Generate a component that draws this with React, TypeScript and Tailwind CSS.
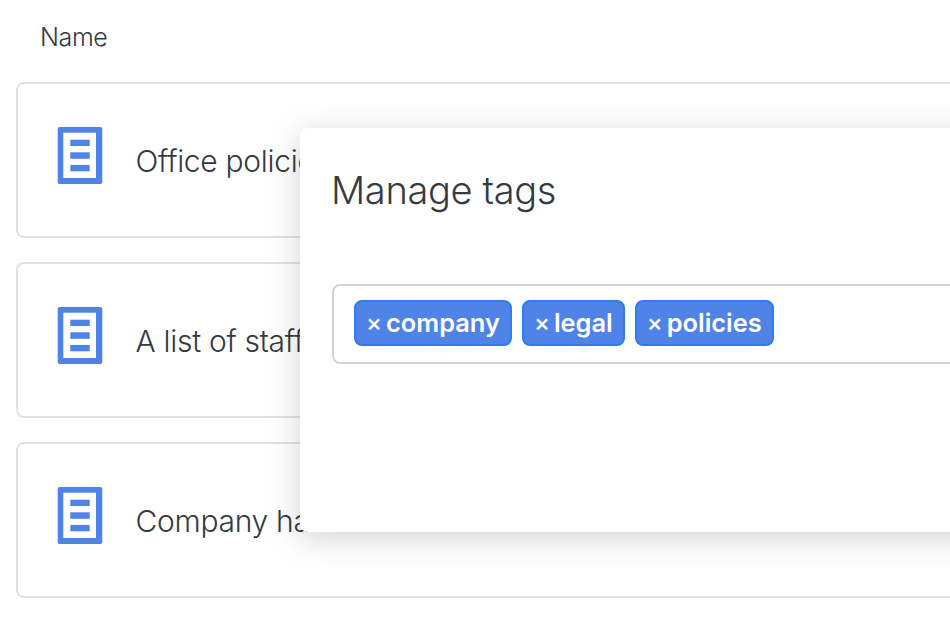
import React from 'react';

const font = "font-['Inter','Noto_Sans',sans-serif]";

const DocIcon = () => (
    <svg width="46" height="58" viewBox="0 0 46 58" className="shrink-0">
        <rect x="0.7" y="0" width="44.6" height="57" rx="2" fill="#4f83e8" />
        <rect x="6.3" y="5.7" width="32.7" height="45.3" fill="#ffffff" />
        <rect x="13.3" y="12.7" width="19.4" height="6.3" fill="#4f83e8" />
        <rect x="13.3" y="25.3" width="19.4" height="6.5" fill="#4f83e8" />
        <rect x="13.3" y="38" width="19.4" height="6.3" fill="#4f83e8" />
    </svg>
);

const FileRow = ({ name }: { name: string }) => (
    <div className="flex items-center h-[156px] w-[1100px] border-2 border-[#dee2e6] rounded-[8px] pl-[39px] pb-[8px]">
        <DocIcon />
        <span className="ml-[32.5px] mt-[10px] text-[30px] font-light text-[#343a40] tracking-[-0.3px]">{name}</span>
    </div>
);

const Tag = ({ label }: { label: string }) => (
    <span className="flex items-center h-[46px] pl-[10px] pr-[10px] bg-[#4f83e8] border-2 border-[#2f7bf0] rounded-[8px] text-white text-[25.4px] font-semibold">
        <span className="mr-[4px] text-[24px] font-medium">×</span>
        {label}
    </span>
);

export default function App() {
    return (
        <div className={`relative w-[950px] h-[620px] overflow-hidden bg-white ${font}`}>
            <div className="px-[16px]">
                <div className="h-[82px] pl-[24px] pt-[19px] text-[25px] font-light text-[#343a40] tracking-[-0.4px]">Name</div>
                <div className="flex flex-col gap-[24px]">
                    <FileRow name="Office policies" />
                    <FileRow name="A list of staff" />
                    <FileRow name="Company handbook" />
                </div>
            </div>

            <div className="absolute left-[300px] top-[128px] w-[900px] h-[404px] bg-white rounded-[8px] shadow-[0_6px_32px_rgba(0,0,0,0.18)] px-[32px] pt-[38px]">
                <h2 className="-ml-[1px] text-[38px] leading-[48px] font-light text-[#343a40] tracking-[-0.35px]">Manage tags</h2>
                <div className="mt-[70px] flex items-center gap-[10px] h-[80px] pb-[2px] border-2 border-[#ced4da] rounded-[8px] px-[20px]">
                    <Tag label="company" />
                    <Tag label="legal" />
                    <Tag label="policies" />
                </div>
            </div>
        </div>
    );
}
